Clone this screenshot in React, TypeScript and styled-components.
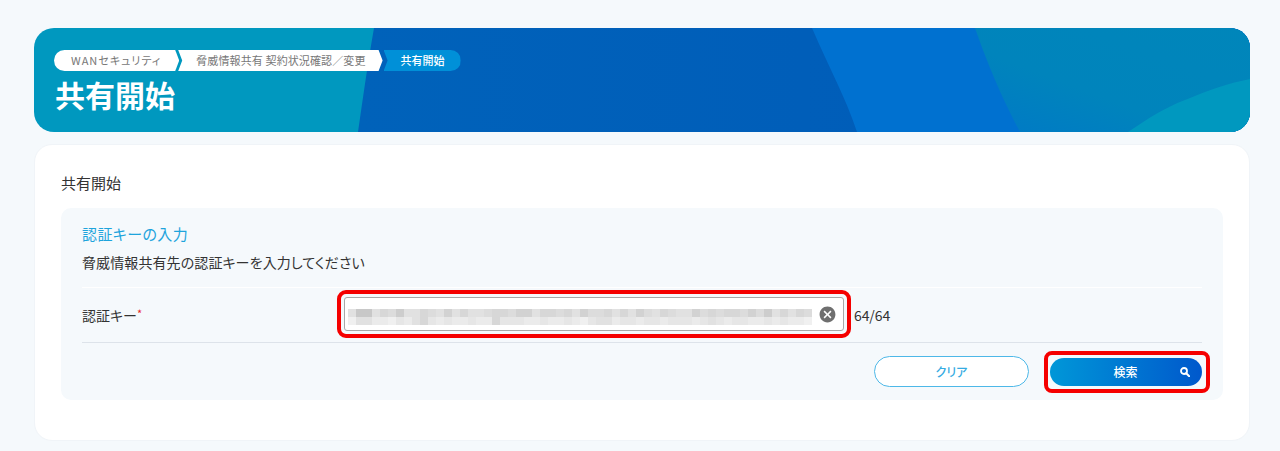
import styled, { createGlobalStyle } from "styled-components";
import { MdCancel } from "react-icons/md";

const GlobalStyle = createGlobalStyle`
  html, body {
    margin: 0;
    height: 100%;
    overflow: hidden;
    background: #f5f9fc;
    color: #333;
    font-family: "Noto Sans CJK JP", "Noto Sans", sans-serif;
    font-feature-settings: "palt";
  }
  * { box-sizing: border-box; }
`;

type CrumbKind = "first" | "middle" | "last";

const crumbs: { label: string; kind: CrumbKind }[] = [
  { label: "WANセキュリティ", kind: "first" },
  { label: "脅威情報共有 契約状況確認／変更", kind: "middle" },
  { label: "共有開始", kind: "last" },
];

// mosaic over the key, one hex digit per 8px cell
const mosaicTop = "b66b9a7bb9ab8b9bba99a88b99a9b8aa9b9b8ab9abb8a9a99a8a7b9b9a";
const mosaicBottom = "ebbddecdb9cdcddcdd9cccddcddcdecbbdccdccdcccdcbcdccddcdcdde";

const shade = (digit: string) => {
  const v = 170 + parseInt(digit, 16) * 5;
  return `rgb(${v}, ${v}, ${v})`;
};

const App = () => {
  return (
    <Page>
      <GlobalStyle />
      <Hero>
        <HeroArt viewBox="0 0 1216 104" preserveAspectRatio="none" aria-hidden="true">
          <defs>
            <linearGradient id="deep" x1="0" y1="0" x2="1" y2="0">
              <stop offset="0" stopColor="#0062ba" />
              <stop offset="1" stopColor="#005ab8" />
            </linearGradient>
            <linearGradient id="haze" x1="0" y1="1" x2="1" y2="0">
              <stop offset="0" stopColor="#0079c6" />
              <stop offset="0.4" stopColor="#0084bc" />
              <stop offset="1" stopColor="#0086ba" />
            </linearGradient>
          </defs>
          <path d="M340 0 C333 40 329 70 324 104 L1216 104 L1216 0 Z" fill="url(#deep)" />
          <path d="M778 0 C795 40 812 70 823 104 L1216 104 L1216 0 Z" fill="#0071d0" />
          <path d="M941 0 C955 40 968 70 986 104 L1216 104 L1216 0 Z" fill="url(#haze)" />
          <path d="M1094 104 C1115 90 1130 80 1151 72 C1175 62 1195 55 1216 51 L1216 104 Z" fill="#0098bf" />
        </HeroArt>
        <Breadcrumb>
          {crumbs.map((crumb) => (
            <Crumb key={crumb.label} $kind={crumb.kind}>
              {crumb.label}
            </Crumb>
          ))}
        </Breadcrumb>
        <Title>共有開始</Title>
      </Hero>

      <Card>
        <CardTitle>共有開始</CardTitle>
        <Panel>
          <PanelHeading>認証キーの入力</PanelHeading>
          <PanelText>脅威情報共有先の認証キーを入力してください</PanelText>
          <FieldRow>
            <FieldLabel>
              認証キー<Required>*</Required>
            </FieldLabel>
            <Highlight>
              <KeyBox>
                <Mosaic>
                  {[mosaicTop, mosaicBottom].map((row, r) =>
                    row.split("").map((digit, i) => (
                      <MosaicCell key={`${r}-${i}`} style={{ background: shade(digit) }} />
                    ))
                  )}
                </Mosaic>
                <ClearIcon>
                  <MdCancel size={19} />
                </ClearIcon>
              </KeyBox>
            </Highlight>
            <Counter>64/64</Counter>
          </FieldRow>
          <Actions>
            <ClearButton type="button">クリア</ClearButton>
            <ButtonHighlight>
              <SearchButton type="button">
                <span />
                <span>検索</span>
                <SearchIcon viewBox="0 0 10 10" aria-hidden="true">
                  <circle cx="4" cy="4" r="3" fill="none" stroke="#fff" strokeWidth="1.8" />
                  <path d="M6.2 6.2 L9.2 9.2" stroke="#fff" strokeWidth="2" strokeLinecap="round" />
                </SearchIcon>
              </SearchButton>
            </ButtonHighlight>
          </Actions>
        </Panel>
      </Card>
    </Page>
  );
};

const Page = styled.main`
  padding: 28px 30px 0 34px;
`;

const Hero = styled.header`
  position: relative;
  height: 104px;
  margin-bottom: 12px;
  padding: 22px 20px 0;
  border-radius: 20px;
  background: #0098bf;
  overflow: hidden;
`;

const HeroArt = styled.svg`
  position: absolute;
  inset: 0;
  width: 100%;
  height: 100%;
`;

const Breadcrumb = styled.nav`
  position: relative;
  display: flex;
`;

const crumbShape: Record<CrumbKind, string> = {
  first: `
    padding: 0 18px 0 17px;
    border-radius: 11px 0 0 11px;
    letter-spacing: 1px;
    clip-path: polygon(0 0, calc(100% - 4px) 0, 100% 50%, calc(100% - 4px) 100%, 0 100%);
  `,
  middle: `
    margin-left: -1px;
    padding: 0 17px 0 18px;
    letter-spacing: 0.12px;
    clip-path: polygon(0 0, calc(100% - 4px) 0, 100% 50%, calc(100% - 4px) 100%, 0 100%, 4px 50%);
  `,
  last: `
    margin-left: 1px;
    padding: 0 16px 0 17px;
    border-radius: 0 11px 11px 0;
    clip-path: polygon(0 0, 100% 0, 100% 100%, 0 100%, 4px 50%);
    background: #0090d8;
    color: #fff;
    font-weight: 500;
  `,
};

const Crumb = styled.span<{ $kind: CrumbKind }>`
  height: 21px;
  background: #fff;
  color: #777;
  font-size: 11px;
  line-height: 21px;
  white-space: nowrap;
  ${({ $kind }) => crumbShape[$kind]}
`;

const Title = styled.h1`
  position: relative;
  margin: 3px 0 0 1px;
  color: #fff;
  font-size: 30px;
  font-weight: 700;
  line-height: 40px;
`;

const Card = styled.section`
  height: 297px;
  padding: 27px 26px 0;
  border: 1px solid #f0f4f8;
  border-radius: 18px;
  background: #fff;
`;

const CardTitle = styled.h2`
  margin: -1px 0 13px;
  font-size: 15px;
  font-weight: 400;
  line-height: 24px;
`;

const Panel = styled.div`
  height: 192px;
  padding: 14px 21px 0;
  border-radius: 10px;
  background: #f5f9fc;
`;

const PanelHeading = styled.h3`
  margin: 0;
  color: #1ea4dc;
  font-size: 15px;
  font-weight: 400;
  line-height: 24px;
  letter-spacing: 0.4px;
`;

const PanelText = styled.p`
  margin: 5px 0 14px;
  font-size: 14px;
  line-height: 22px;
  letter-spacing: 0.1px;
`;

const FieldRow = styled.div`
  display: flex;
  align-items: center;
  height: 56px;
  border-top: 1px solid #fff;
  border-bottom: 1px solid #dde3ea;
`;

const FieldLabel = styled.label`
  width: 255px;
  font-size: 14px;
`;

const Required = styled.span`
  color: #e8262a;
  vertical-align: 3px;
  font-size: 11px;
`;

const Highlight = styled.div`
  width: 514px;
  height: 48px;
  margin-bottom: 2px;
  padding: 3px;
  border: 4px solid #f50000;
  border-radius: 9px;
`;

const KeyBox = styled.div`
  display: flex;
  align-items: center;
  justify-content: space-between;
  height: 100%;
  padding: 0 6px 0 3px;
  border: 1px solid #a8a8a8;
  border-radius: 3px;
  background: #fff;
`;

const Mosaic = styled.div`
  display: grid;
  grid-template-columns: repeat(58, 8px);
  grid-auto-rows: 8px;
  margin-top: 6px;
`;

const MosaicCell = styled.i`
  display: block;
`;

const ClearIcon = styled.span`
  display: flex;
  color: #6f6f6f;
`;

const Counter = styled.span`
  margin-left: 3px;
  font-size: 14px;
  letter-spacing: -0.1px;
`;

const Actions = styled.div`
  display: flex;
  align-items: center;
  justify-content: flex-end;
  gap: 15px;
  height: 57px;
  margin-right: -8px;
`;

const ClearButton = styled.button`
  width: 155px;
  height: 31px;
  border: 1px solid #4db8e8;
  border-radius: 16px;
  background: #fff;
  color: #35abe2;
  font: inherit;
  font-size: 12px;
  font-weight: 500;
`;

const ButtonHighlight = styled.div`
  width: 166px;
  height: 42px;
  padding: 3px 4px 3px 2px;
  border: 4px solid #f50000;
  border-radius: 8px;
`;

const SearchButton = styled.button`
  display: grid;
  grid-template-columns: 1fr auto 1fr;
  align-items: center;
  width: 100%;
  height: 100%;
  padding: 0 12px 0 11px;
  border: 0;
  border-radius: 15px;
  background: linear-gradient(90deg, #0097d8, #0058cc);
  color: #fff;
  font: inherit;
  font-size: 12px;
  font-weight: 500;
`;

const SearchIcon = styled.svg`
  justify-self: end;
  width: 10px;
  height: 10px;
`;

export default App;
